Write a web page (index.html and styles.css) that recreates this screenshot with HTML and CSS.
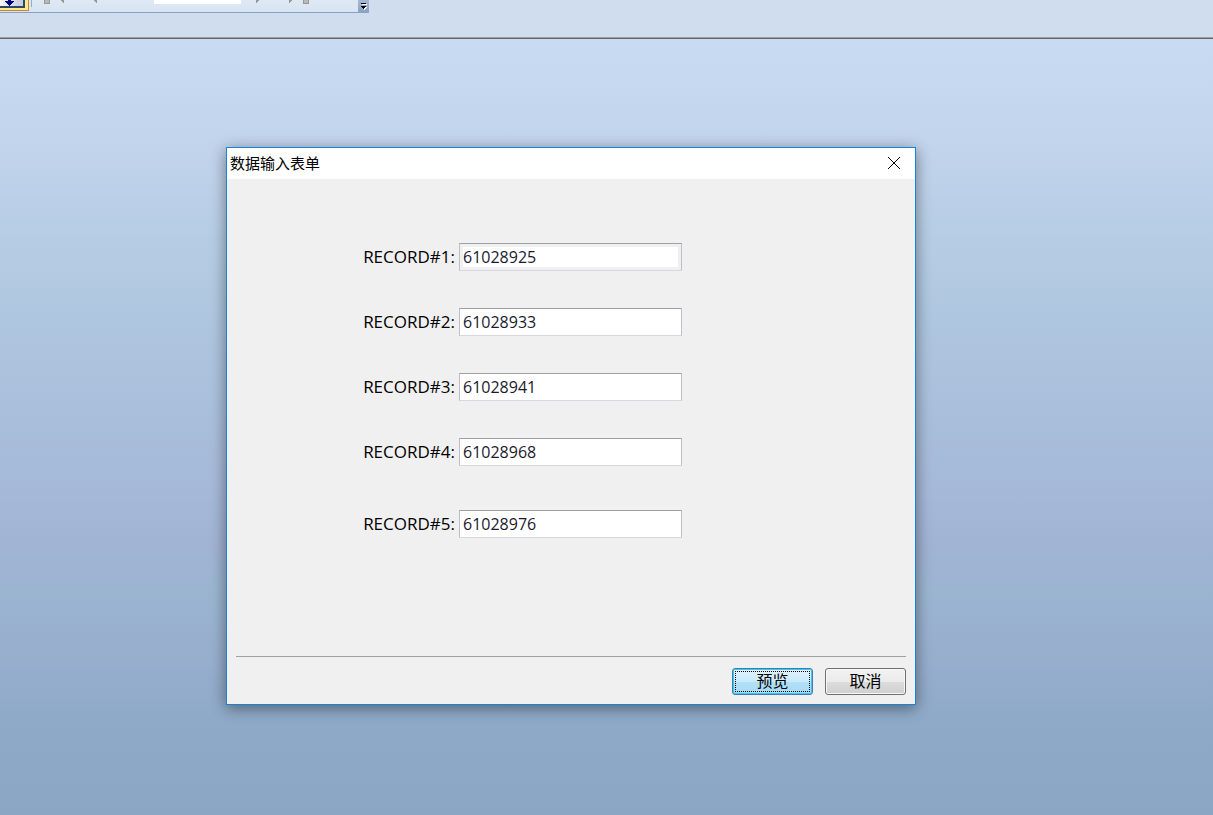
FILE: index.html
```
<!DOCTYPE html>
<html lang="zh-CN">
<head>
    <meta charset="UTF-8">
    <meta name="viewport" content="width=device-width, initial-scale=1.0">
    <title>数据输入表单</title>
    <link rel="stylesheet" href="styles.css">
</head>
<body>
    <header class="top-area">
        <div class="toolbar">
            <button type="button" class="tool-button" aria-label="Print">
                <svg width="29" height="11" viewBox="0 0 29 11" shape-rendering="crispEdges">
                    <defs>
                        <linearGradient id="page-fill" x1="0" y1="0" x2="1" y2="0">
                            <stop offset="0" stop-color="#f4f6fa"/>
                            <stop offset="1" stop-color="#c3cadf"/>
                        </linearGradient>
                    </defs>
                    <path d="M0 0h29v11H0z" fill="#c28a30"/>
                    <path d="M0 0h28v10H0z" fill="#ffe88c"/>
                    <path d="M0 0h25v8H0z" fill="#2e4868"/>
                    <path d="M0 0h23v6H0z" fill="url(#page-fill)"/>
                    <path d="M8 0h3v1h3v1h-1v1h-1v1h-1v1h-1v1H9V5H8V4H7V3H6V2H5V1h3z" fill="#000080"/>
                </svg>
            </button>
            <span class="separator"></span>
            <button type="button" class="nav-button first" aria-label="First record">
                <svg width="20" height="4" viewBox="0 0 20 4" shape-rendering="crispEdges">
                    <path d="M0 0h6v4H0z" fill="#989898"/>
                    <path d="M1 0h4v3H1z" fill="#b8b8b8"/>
                    <path d="M17 0h3v3h-1V2h-1V1h-1z" fill="#989898"/>
                </svg>
            </button>
            <button type="button" class="nav-button previous" aria-label="Previous record">
                <svg width="3" height="4" viewBox="0 0 3 4" shape-rendering="crispEdges">
                    <path d="M0 0h3v3H2V2H1V1H0z" fill="#989898"/>
                </svg>
            </button>
            <input type="text" class="record-box" aria-label="Record">
            <button type="button" class="nav-button next" aria-label="Next record">
                <svg width="3" height="4" viewBox="0 0 3 4" shape-rendering="crispEdges">
                    <path d="M0 0h3v1H2v1H1v1H0z" fill="#989898"/>
                </svg>
            </button>
            <button type="button" class="nav-button last" aria-label="Last record">
                <svg width="20" height="4" viewBox="0 0 20 4" shape-rendering="crispEdges">
                    <path d="M0 0h3v1H2v1H1v1H0z" fill="#989898"/>
                    <path d="M14 0h6v4h-6z" fill="#989898"/>
                    <path d="M15 0h4v3h-4z" fill="#b8b8b8"/>
                </svg>
            </button>
            <button type="button" class="overflow-button" aria-label="More">
                <svg width="11" height="13" viewBox="0 0 11 13" shape-rendering="crispEdges">
                    <path d="M4 4h5v1H4zM5 7h4v1H8v1H7v1H6V9H5z" fill="#fff"/>
                    <path d="M3 3h5v1H3zM3 6h5v1H7v1H6v1H5V8H4V7H3z" fill="#000"/>
                </svg>
            </button>
        </div>
    </header>
    <main class="workspace"></main>

    <div class="dialog" role="dialog" aria-labelledby="dialog-title">
        <div class="title-bar">
            <h1 id="dialog-title">数据输入表单</h1>
            <button type="button" class="close-button" aria-label="关闭">
                <svg width="14" height="14" viewBox="0 0 14 14">
                    <path d="M1 1l12 12M13 1L1 13" stroke="#000" stroke-width="1" fill="none"/>
                </svg>
            </button>
        </div>
        <form id="record-form">
            <div class="fields">
                <div class="form-group">
                    <label for="record-1">RECORD#1:</label>
                    <input type="text" id="record-1" class="active" value="61028925">
                </div>
                <div class="form-group">
                    <label for="record-2">RECORD#2:</label>
                    <input type="text" id="record-2" value="61028933">
                </div>
                <div class="form-group">
                    <label for="record-3">RECORD#3:</label>
                    <input type="text" id="record-3" value="61028941">
                </div>
                <div class="form-group">
                    <label for="record-4">RECORD#4:</label>
                    <input type="text" id="record-4" value="61028968">
                </div>
                <div class="form-group last-group">
                    <label for="record-5">RECORD#5:</label>
                    <input type="text" id="record-5" value="61028976">
                </div>
            </div>
            <div class="actions">
                <button type="button" class="button primary-button"><span>预览</span></button>
                <button type="button" class="button"><span>取消</span></button>
            </div>
        </form>
    </div>
</body>
</html>
```
FILE: styles.css
```
* {
    box-sizing: border-box;
}

body {
    margin: 0;
    min-height: 100vh;
    display: flex;
    flex-direction: column;
    font-family: "Open Sans", "Noto Sans CJK SC", sans-serif;
    color: #000;
}

button {
    padding: 0;
    border: none;
    background: none;
}

svg {
    display: block;
}

.top-area {
    height: 39px;
    background-color: #d0ddee;
    border-bottom: 1px solid #666;
    box-shadow: inset 0 -1px #a09f9f;
}

.toolbar {
    display: flex;
    align-items: flex-start;
    width: 369px;
    height: 13px;
    background: linear-gradient(#dfe9f5, #d8e4f2);
    border-bottom: 1px solid #8c9fc4;
    border-bottom-right-radius: 2px;
}

.separator {
    width: 1px;
    height: 7px;
    margin-left: 2px;
    background-color: #9aaac6;
}

.nav-button.first {
    margin-left: 12px;
}

.nav-button.previous {
    margin-left: 30px;
}

.record-box {
    width: 87px;
    height: 4px;
    margin-left: 57px;
    padding: 0;
    border: none;
    background-color: #fff;
}

.nav-button.next {
    margin-left: 15px;
}

.nav-button.last {
    margin-left: 30px;
}

.overflow-button {
    margin-left: auto;
    background: linear-gradient(#a5b8d4, #8ca0c4);
}

.workspace {
    flex: 1;
    background: linear-gradient(#c9dbf2 0%, #c1d4ec 14%, #b0c8e0 33%, #a5b8d8 59%, #a0b3d3 66%, #9bb5d1 71%, #97aecd 80%, #8faac8 87%, #8ba5c5 100%);
}

.dialog {
    position: absolute;
    top: 147px;
    left: 226px;
    width: 690px;
    background-color: #f0f0f0;
    border: 1px solid #1883d7;
    box-shadow: 0 3px 14px rgba(0, 0, 0, 0.45);
}

.title-bar {
    display: flex;
    align-items: flex-start;
    justify-content: space-between;
    height: 31px;
    padding: 0 14px 0 3px;
    background-color: #fff;
}

.title-bar h1 {
    margin: 0;
    font-size: 15px;
    font-weight: normal;
    line-height: 30px;
}

.close-button {
    margin-top: 8px;
}

.fields {
    display: flex;
    flex-direction: column;
    gap: 37px;
    padding: 64px 0 118px;
}

.form-group {
    display: flex;
    align-items: center;
    gap: 4px;
}

.form-group label {
    width: 228px;
    font-size: 17px;
    line-height: 28px;
    text-align: right;
}

.form-group input {
    width: 223px;
    height: 28px;
    padding: 0 3px;
    border: 1px solid;
    border-color: #9f9fab #bfbfc9 #d7d7dd #bfbfc9;
    background-color: #fff;
    color: #1a1a2e;
    font-family: inherit;
    font-size: 16px;
}

.form-group input.active {
    box-shadow: inset 0 0 0 3px #f0f0f0;
}

.last-group {
    margin-top: 7px;
}

.actions {
    display: flex;
    justify-content: flex-end;
    gap: 12px;
    margin: 0 9px;
    padding: 11px 0 9px;
    border-top: 1px solid #a0a0a0;
}

.button {
    width: 81px;
    height: 27px;
    padding: 2px;
    border: 1px solid #707070;
    border-radius: 3px;
    background: linear-gradient(#f2f2f2 0%, #ebebeb 50%, #dddddd 50%, #cfcfcf 100%);
    box-shadow: inset 0 0 0 1px #f8f8f8;
    font-family: inherit;
    font-size: 16px;
    line-height: 21px;
    color: #000;
}

.button span {
    display: block;
}

.primary-button {
    border-color: #3c7fb1;
    background: linear-gradient(#e5f4fc 0%, #c8eafc 50%, #b2e1f9 50%, #a6daf5 100%);
    box-shadow: inset 0 0 0 1px #3cc5f2;
}

.primary-button span {
    border: 1px dotted #000;
    line-height: 19px;
}
```
